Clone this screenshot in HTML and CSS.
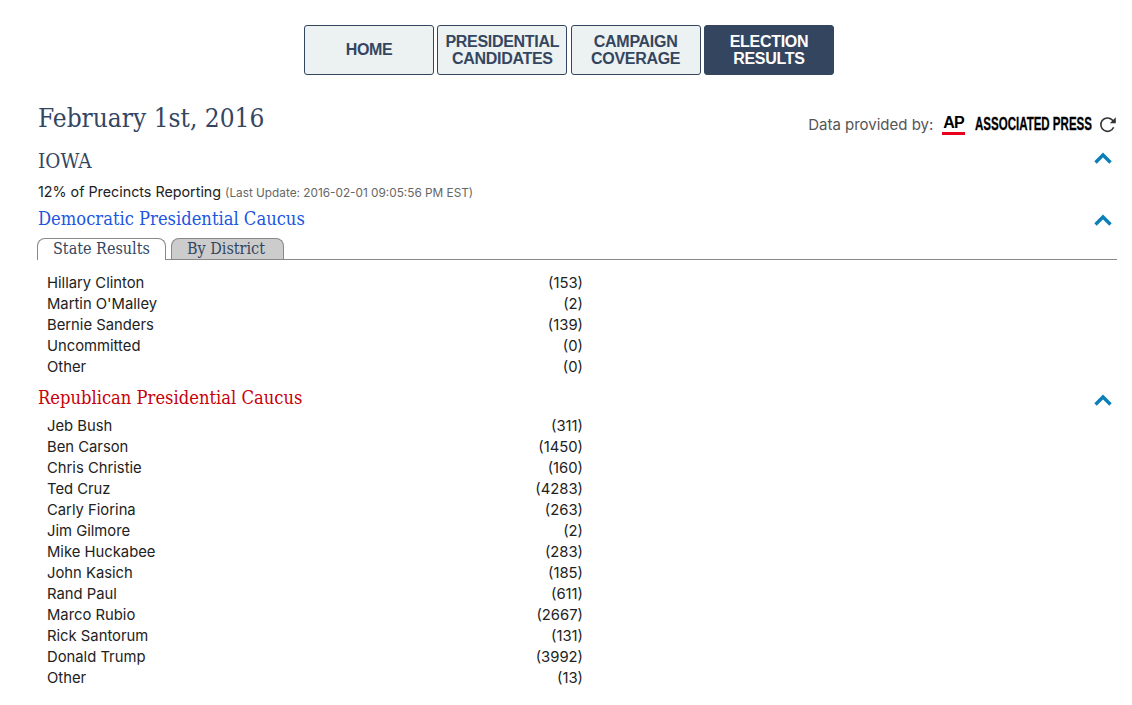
FILE: index.html
```html
<!DOCTYPE html>
<html lang="en">
<head>
<meta charset="utf-8">
<title>Election Results</title>
<link rel="stylesheet" href="styles.css">
</head>
<body>
<nav class="nav">
  <a class="nav-btn">HOME</a>
  <a class="nav-btn">PRESIDENTIAL<br>CANDIDATES</a>
  <a class="nav-btn">CAMPAIGN<br>COVERAGE</a>
  <a class="nav-btn active">ELECTION<br>RESULTS</a>
</nav>
<main class="page">
  <header class="date-row">
    <h1 class="date">February 1st, 2016</h1>
    <div class="source">
      <span class="source-label">Data provided by:</span>
      <span class="ap-mark">AP</span>
      <span class="ap-box"><span class="ap-name">ASSOCIATED PRESS</span></span>
      <svg class="refresh" viewBox="0 0 16 16" width="17" height="17"><path d="M13.8 10.6A6.3 6.3 0 1 1 12.4 3.6L14.4 5.4" fill="none" stroke="#333" stroke-width="1.5"/><path d="M15.8 1.2v5.6h-5.6z" fill="#333"/></svg>
    </div>
  </header>
  <div class="state-row">
    <h2 class="state">IOWA</h2>
    <svg class="chev" viewBox="0 0 18 12" width="18" height="12"><path d="M1.5 10.5L9 3 16.5 10.5" fill="none" stroke="#0b7fb8" stroke-width="3.4"/></svg>
  </div>
  <p class="report">12% of Precincts Reporting <small>(Last Update: 2016-02-01 09:05:56 PM EST)</small></p>
  <div class="race-row dem-row">
    <h3 class="race dem">Democratic Presidential Caucus</h3>
    <svg class="chev" viewBox="0 0 18 12" width="18" height="12"><path d="M1.5 10.5L9 3 16.5 10.5" fill="none" stroke="#0b7fb8" stroke-width="3.4"/></svg>
  </div>
  <div class="tabs">
    <span class="tab current">State Results</span>
    <span class="tab second">By District</span>
  </div>
  <ul class="results first">
    <li><span>Hillary Clinton</span><span>(153)</span></li>
    <li><span>Martin O'Malley</span><span>(2)</span></li>
    <li><span>Bernie Sanders</span><span>(139)</span></li>
    <li><span>Uncommitted</span><span>(0)</span></li>
    <li><span>Other</span><span>(0)</span></li>
  </ul>
  <div class="race-row rep-row">
    <h3 class="race rep">Republican Presidential Caucus</h3>
    <svg class="chev" viewBox="0 0 18 12" width="18" height="12"><path d="M1.5 10.5L9 3 16.5 10.5" fill="none" stroke="#0b7fb8" stroke-width="3.4"/></svg>
  </div>
  <ul class="results">
    <li><span>Jeb Bush</span><span>(311)</span></li>
    <li><span>Ben Carson</span><span>(1450)</span></li>
    <li><span>Chris Christie</span><span>(160)</span></li>
    <li><span>Ted Cruz</span><span>(4283)</span></li>
    <li><span>Carly Fiorina</span><span>(263)</span></li>
    <li><span>Jim Gilmore</span><span>(2)</span></li>
    <li><span>Mike Huckabee</span><span>(283)</span></li>
    <li><span>John Kasich</span><span>(185)</span></li>
    <li><span>Rand Paul</span><span>(611)</span></li>
    <li><span>Marco Rubio</span><span>(2667)</span></li>
    <li><span>Rick Santorum</span><span>(131)</span></li>
    <li><span>Donald Trump</span><span>(3992)</span></li>
    <li><span>Other</span><span>(13)</span></li>
  </ul>
</main>
</body>
</html>
```
FILE: styles.css
```css
* { box-sizing: border-box; }
html, body { margin: 0; padding: 0; background: #fff; }
body { font-family: "Inter", "Lato", sans-serif; color: #222; height: 705px; overflow: hidden; }
.nav { display: flex; justify-content: center; gap: 3.3px; padding: 25px 0 0 6px; }
.nav-btn { width: 130px; height: 50px; padding-bottom: 1px; display: flex; align-items: center; justify-content: center; text-align: center; background: #ecf1f1; border: 1px solid #34465f; border-radius: 3px; color: #34465f; font: bold 16px/17px "Liberation Sans", Arial, sans-serif; letter-spacing: -0.3px; }
.nav-btn.active { background: #34465f; color: #fff; }
.page { padding: 0 15px 0 38px; }
.date-row { display: flex; justify-content: space-between; align-items: center; margin-top: 25px; height: 36px; }
.date { margin: 0; font: 400 26px/36px "DejaVu Serif Condensed", "DejaVu Serif", serif; color: #34465f; }
.source { display: flex; align-items: center; font-size: 15px; color: #555; margin-top: 12px; padding-right: 1px; }
.ap-mark { font: bold 16px/18px "Liberation Sans", sans-serif; color: #000; border-bottom: 3px solid #e8001c; margin-left: 9px; margin-top: 1px; padding: 0 1px; letter-spacing: -0.8px; }
.ap-box { display: block; width: 117px; height: 18px; margin-left: 10px; }
.ap-name { display: block; width: 190px; white-space: nowrap; font: bold 18px/18px "Liberation Sans", sans-serif; color: #000; transform: scaleX(0.64); transform-origin: left center; -webkit-text-stroke: 0.3px #000; }
.refresh { margin-left: 7px; }
.state-row, .race-row { display: flex; justify-content: space-between; align-items: center; padding-right: 5px; }
.state-row { margin-top: 13px; height: 24px; }
.state { margin: 0; font: 400 20.5px/24px "DejaVu Serif Condensed", "DejaVu Serif", serif; color: #34465f; }
.state-row .chev { margin-top: -6px; }
.dem-row .chev { margin-top: 2px; }
.rep-row .chev { margin-top: 4px; }
.report { margin: 9px 0 0; font-size: 14.3px; line-height: 20px; color: #222; }
.report small { font-size: 11.8px; color: #666; }
.race-row { height: 24px; }
.dem-row { margin-top: 4px; }
.race { margin: 0; font: 400 18.2px/24px "DejaVu Serif Condensed", "DejaVu Serif", serif; }
.dem { color: #1d56e0; }
.rep { color: #c8000a; }
.tabs { display: flex; gap: 5px; margin: 7px 0 0 -1px; border-bottom: 1px solid #888; height: 22px; }
.tab { height: 21px; padding: 0 15px; font: 400 16px/20px "DejaVu Serif Condensed", "DejaVu Serif", serif; color: #34465f; background: #ccc; border: 1px solid #888; border-bottom: none; border-radius: 8px 8px 0 0; }
.tab.current { background: #fff; height: 22px; margin-bottom: -1px; width: 129px; }
.tab.second { width: 113px; }
.results { list-style: none; margin: 0; padding: 0 0 0 9px; width: 545px; font-size: 14.8px; line-height: 21px; color: #222; }
.results.first { margin-top: 13px; }
.results li { display: flex; justify-content: space-between; }
.rep-row { margin-top: 8px; margin-bottom: 6px; }
```
